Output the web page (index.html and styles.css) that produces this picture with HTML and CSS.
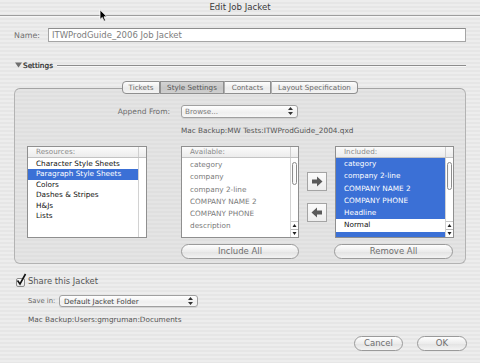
FILE: index.html
```html
<!DOCTYPE html>
<html>
<head>
<meta charset="utf-8">
<link rel="stylesheet" href="styles.css">
</head>
<body>
<div class="window">
  <div class="titlebar">Edit Job Jacket</div>

  <div class="name-row">
    <span class="name-label">Name:</span>
    <div class="name-input">ITWProdGuide_2006 Job Jacket</div>
  </div>

  <div class="settings-row">
    <svg class="disclosure" width="7" height="6" viewBox="0 0 7 6"><path d="M0 0.5h7L3.5 5.5z" fill="#6e6e6e"/></svg>
    <span class="settings-label">Settings</span>
    <span class="settings-line"></span>
  </div>

  <div class="groupbox">
    <div class="tabs">
      <div class="tab t1">Tickets</div>
      <div class="tab t2 active">Style Settings</div>
      <div class="tab t3">Contacts</div>
      <div class="tab t4">Layout Specification</div>
    </div>

    <div class="append-row">
      <span class="append-label">Append From:</span>
      <div class="popup append-popup">
        <span class="popup-text">Browse...</span>
        <svg class="popup-arrows" width="5" height="8" viewBox="0 0 5 8"><path d="M2.5 0L5 3H0z M2.5 8L5 5H0z" fill="#333"/></svg>
      </div>
    </div>
    <div class="append-path">Mac Backup:MW Tests:ITWProdGuide_2004.qxd</div>

    <div class="lists">
      <div class="list res">
        <div class="lhead"><span class="lh-title">Resources:</span><span class="lh-corner"></span></div>
        <div class="lbody">
          <ul class="items dark">
            <li>Character Style Sheets</li>
            <li class="sel">Paragraph Style Sheets</li>
            <li>Colors</li>
            <li>Dashes &amp; Stripes</li>
            <li>H&amp;Js</li>
            <li>Lists</li>
          </ul>
          <div class="vscroll"></div>
        </div>
      </div>

      <div class="list avail">
        <div class="lhead"><span class="lh-title">Available:</span><span class="lh-corner"></span></div>
        <div class="lbody">
          <ul class="items tall grey">
            <li>category</li>
            <li>company</li>
            <li>company 2-line</li>
            <li>COMPANY NAME 2</li>
            <li>COMPANY PHONE</li>
            <li>description</li>
          </ul>
          <div class="vscroll">
            <div class="thumb"></div>
            <div class="scroll-arrows">
              <svg width="7" height="15" viewBox="0 0 7 15"><path d="M0 7.5h7" stroke="#bbb" stroke-width="1"/><path d="M3.5 2L5.5 5h-4z M3.5 13L5.5 10h-4z" fill="#222"/></svg>
            </div>
          </div>
        </div>
      </div>

      <div class="arrows">
        <div class="arrow-btn">
          <svg width="12" height="11" viewBox="0 0 12 11"><path d="M1 3.5h5V0.5l5.5 5-5.5 5V7.5H1z" fill="#5a5a5a"/></svg>
        </div>
        <div class="arrow-btn">
          <svg width="12" height="11" viewBox="0 0 12 11"><path d="M11 3.5H6V0.5L0.5 5.5 6 10.5V7.5h5z" fill="#5a5a5a"/></svg>
        </div>
      </div>

      <div class="list inc">
        <div class="lhead"><span class="lh-title">Included:</span><span class="lh-corner"></span></div>
        <div class="lbody">
          <ul class="items tall">
            <li class="sel">category</li>
            <li class="sel">company 2-line</li>
            <li class="sel">COMPANY NAME 2</li>
            <li class="sel">COMPANY PHONE</li>
            <li class="sel">Headline</li>
            <li class="plain">Normal</li>
            <li class="sel"></li>
          </ul>
          <div class="vscroll">
            <div class="thumb inc-thumb"></div>
            <div class="scroll-arrows">
              <svg width="7" height="15" viewBox="0 0 7 15"><path d="M0 7.5h7" stroke="#bbb" stroke-width="1"/><path d="M3.5 2L5.5 5h-4z M3.5 13L5.5 10h-4z" fill="#222"/></svg>
            </div>
          </div>
        </div>
      </div>
    </div>

    <div class="list-buttons">
      <div class="pill include-all">Include All</div>
      <div class="pill remove-all">Remove All</div>
    </div>
  </div>

  <div class="share-row">
    <span class="checkbox">
      <svg width="12" height="14" viewBox="0 0 12 14"><path d="M2.5 7.5L5 11L10.5 1" fill="none" stroke="#111" stroke-width="1.6"/></svg>
    </span>
    <span class="share-label">Share this Jacket</span>
  </div>

  <div class="savein-row">
    <span class="savein-label">Save in:</span>
    <div class="popup savein-popup">
      <span class="popup-text">Default Jacket Folder</span>
      <svg class="popup-arrows" width="5" height="8" viewBox="0 0 5 8"><path d="M2.5 0L5 3H0z M2.5 8L5 5H0z" fill="#333"/></svg>
    </div>
  </div>
  <div class="savein-path">Mac Backup:Users:gmgruman:Documents</div>

  <div class="dialog-buttons">
    <div class="pill cancel">Cancel</div>
    <div class="pill ok">OK</div>
  </div>

  <svg class="cursor" width="9" height="13" viewBox="0 0 9 13"><path d="M1 0.8V10.5L3.3 8.4L5 12.2L6.6 11.5L5 7.8H8z" fill="#000" stroke="#fff" stroke-width="0.8"/></svg>
</div>
</body>
</html>
```

FILE: styles.css
```css
html, body {
  margin: 0;
  padding: 0;
}
body {
  width: 480px;
  height: 363px;
  overflow: hidden;
  font-family: "DejaVu Sans", "Noto Sans", sans-serif;
  font-size: 7.3px;
  color: #333;
}
.window {
  position: relative;
  width: 480px;
  height: 363px;
  box-sizing: border-box;
  background: repeating-linear-gradient(#ededed 0 2px, #e6e6e6 2px 4px);
}
.titlebar {
  height: 15px;
  line-height: 15px;
  text-align: center;
  font-size: 8.6px;
  color: #3a3a3a;
  border-bottom: 1px solid #9d9d9d;
  box-shadow: 0 1px 0 #f6f6f6;
}

/* name */
.name-row {
  display: flex;
  align-items: center;
  margin-top: 12px;
  padding-left: 14px;
  height: 14px;
}
.name-label {
  width: 34px;
  font-size: 7.9px;
  color: #6e6e6e;
}
.name-input {
  width: 418px;
  height: 14px;
  box-sizing: border-box;
  border: 1px solid #a5a5a5;
  border-top-color: #8d8d8d;
  background: #fff;
  font-size: 8.5px;
  line-height: 12px;
  padding-left: 3px;
  color: #7d7d7d;
}

/* settings */
.settings-row {
  display: flex;
  align-items: center;
  margin-top: 18px;
  height: 10px;
  padding-left: 15px;
  padding-right: 14px;
}
.disclosure {
  display: block;
  margin-right: 1px;
}
.settings-label {
  font-size: 7.3px;
  color: #1e1e1e;
  -webkit-text-stroke: 0.2px #1e1e1e;
}
.settings-line {
  flex: 1;
  margin-left: 4px;
  margin-top: 2px;
  border-top: 1px solid #8c8c8c;
  border-bottom: 1px solid #f8f8f8;
}

/* group box */
.groupbox {
  margin: 18px 0 0 14px;
  width: 452px;
  height: 176px;
  box-sizing: border-box;
  border: 1px solid #b3b3b3;
  border-top-color: #a3a3a3;
  border-radius: 6px;
  background: repeating-linear-gradient(#e4e4e4 0 2px, #dfdfdf 2px 4px);
  padding-left: 12px;
}
.tabs {
  display: flex;
  justify-content: center;
  margin-top: -8px;
  margin-left: -12px;
  height: 13px;
}
.tab {
  box-sizing: border-box;
  height: 13px;
  line-height: 11px;
  text-align: center;
  font-size: 7.2px;
  color: #6a6a6a;
  border: 1px solid #8f8f8f;
  border-left: 1px solid #b0b0b0;
  background: linear-gradient(#fdfdfd, #ececec 55%, #f3f3f3);
}
.tab.t1 { width: 38px; border-left-color: #8f8f8f; border-radius: 4px 0 0 4px; }
.tab.t2 { width: 64px; }
.tab.t3 { width: 47px; }
.tab.t4 { width: 87px; border-radius: 0 4px 4px 0; }
.tab.active {
  background: linear-gradient(#d4d4d4, #c6c6c6 55%, #cfcfcf);
  color: #555;
  border-left-color: #8f8f8f;
}

.append-row {
  display: flex;
  align-items: center;
  margin-top: 11px;
  margin-left: -12px;
  height: 12px;
}
.append-label {
  width: 155px;
  text-align: right;
  color: #6c6c6c;
  font-size: 7.5px;
}
.popup {
  display: flex;
  align-items: center;
  box-sizing: border-box;
  border: 1px solid #a0a0a0;
  border-radius: 3px;
  background: linear-gradient(#ffffff, #efefef 60%, #f7f7f7);
  box-shadow: 0 1px 0 rgba(0,0,0,0.08);
}
.append-popup {
  margin-left: 11px;
  width: 117px;
  height: 13px;
}
.popup-text {
  flex: 1;
  padding-left: 3px;
  font-size: 7.2px;
  color: #7a7a7a;
  line-height: 11px;
}
.popup-arrows {
  display: block;
  margin-right: 4px;
}
.append-path {
  margin-top: 9px;
  margin-left: 154px;
  height: 10px;
  line-height: 10px;
  color: #555;
}

/* lists */
.lists {
  display: flex;
  margin-top: 10px;
  height: 92px;
}
.list {
  display: flex;
  flex-direction: column;
  box-sizing: border-box;
  height: 92px;
  border: 1px solid #8f8f8f;
  background: #fff;
}
.list.res { width: 120px; }
.list.avail { width: 118px; margin-left: 34px; }
.list.inc { width: 119px; margin-left: 8px; }
.lhead {
  display: flex;
  height: 11px;
  box-sizing: border-box;
  border-bottom: 1px solid #c3c3c3;
  background: linear-gradient(#fbfbfb, #ececec);
}
.lh-title {
  flex: 1;
  padding-left: 8px;
  line-height: 10px;
  color: #8a8a8a;
  font-size: 7.2px;
}
.lh-corner {
  width: 7px;
  border-left: 1px solid #cfcfcf;
}
.lbody {
  flex: 1;
  display: flex;
  min-height: 0;
}
.items {
  flex: 1;
  margin: 0;
  padding: 0;
  list-style: none;
  overflow: hidden;
}
.items li {
  height: 10.4px;
  line-height: 10.4px;
  padding-left: 8px;
  white-space: nowrap;
}
.items.dark li { color: #111; }
.items.dark { padding-top: 1px; }
.items.tall li {
  height: 12.3px;
  line-height: 12.3px;
}
.items.grey li { color: #7a7a7a; }
.items.grey { padding-top: 1px; }
.items li.sel {
  background: #3b70d6;
  color: #fff;
}
.items li.plain {
  color: #111;
  background: #fff;
}
.vscroll {
  position: relative;
  width: 7px;
  border-left: 1px solid #d2d2d2;
  background: #fff;
  display: flex;
  flex-direction: column;
}
.thumb {
  margin: 4px 0 0 0.5px;
  width: 5px;
  height: 23px;
  box-sizing: border-box;
  border: 1px solid #8d8d8d;
  border-radius: 3px;
  background: linear-gradient(90deg, #f4f4f4, #ffffff);
}
.thumb.inc-thumb { height: 28px; }
.scroll-arrows {
  margin-top: auto;
  border-top: 1px solid #c8c8c8;
  height: 15px;
}
.scroll-arrows svg { display: block; }

.arrows {
  display: flex;
  flex-direction: column;
  width: 20px;
  margin-left: 8px;
}
.arrow-btn {
  box-sizing: border-box;
  width: 20px;
  height: 19px;
  display: flex;
  align-items: center;
  justify-content: center;
  border: 1px solid #a4a4a4;
  background: linear-gradient(#fbfbfb, #ededed);
}
.arrow-btn:first-child { margin-top: 26px; }
.arrow-btn:last-child { margin-top: 12px; }

.list-buttons {
  display: flex;
  margin-top: 6px;
}
.pill {
  box-sizing: border-box;
  height: 15px;
  line-height: 13px;
  text-align: center;
  font-size: 8.5px;
  color: #6e6e6e;
  border: 1px solid #9a9a9a;
  border-radius: 8px;
  background: linear-gradient(#fefefe, #ececec 50%, #e2e2e2 51%, #f3f3f3);
}
.include-all { width: 118px; margin-left: 154px; }
.remove-all { width: 119px; margin-left: 35px; }

/* share */
.share-row {
  display: flex;
  align-items: center;
  height: 14px;
  margin-top: 10px;
  padding-left: 16px;
}
.checkbox {
  position: relative;
  width: 9px;
  height: 9px;
  box-sizing: border-box;
  border: 1px solid #8a8a8a;
  border-radius: 2px;
  background: linear-gradient(#ffffff, #e6e6e6);
  margin-top: 2px;
}
.checkbox svg {
  position: absolute;
  left: -2px;
  top: -6px;
}
.share-label {
  margin-left: 3px;
  font-size: 8.4px;
  color: #555;
}
.savein-row {
  display: flex;
  align-items: center;
  margin-top: 7px;
  padding-left: 28px;
  height: 12px;
}
.savein-label {
  width: 31px;
  font-size: 6.8px;
  color: #666;
}
.savein-popup {
  width: 139px;
  height: 12px;
}
.savein-popup .popup-text {
  color: #444;
  padding-left: 4px;
}
.savein-path {
  margin-top: 7px;
  padding-left: 28px;
  height: 11px;
  line-height: 11px;
  color: #555;
}
.dialog-buttons {
  display: flex;
  justify-content: flex-end;
  margin-top: 11px;
  padding-right: 13px;
}
.cancel { width: 49px; }
.ok { width: 50px; margin-left: 14px; }

.cursor {
  position: absolute;
  left: 99px;
  top: 9px;
}
```
